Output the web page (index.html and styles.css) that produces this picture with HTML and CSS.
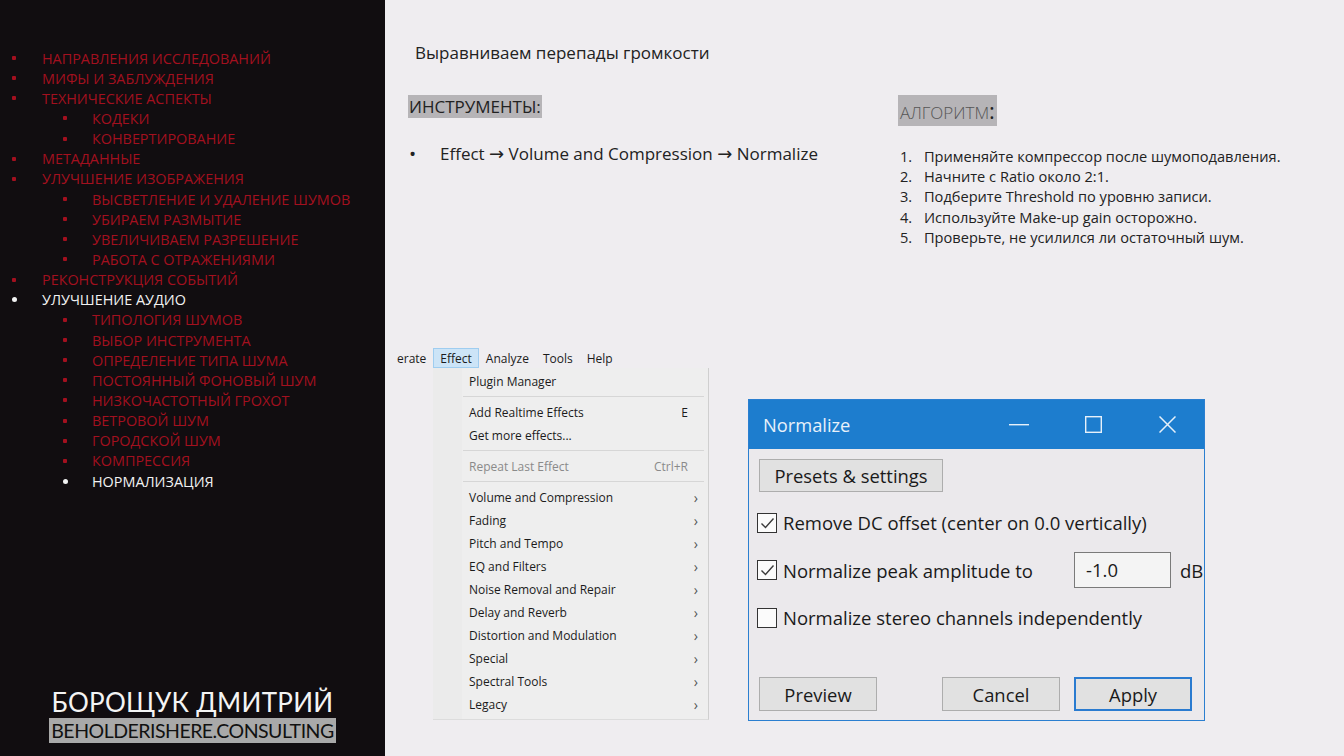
FILE: index.html
```html
<!DOCTYPE html>
<html lang="ru">
<head>
<meta charset="utf-8">
<title>Нормализация</title>
<link rel="stylesheet" href="styles.css">
</head>
<body>
<div class="app">
  <aside class="side">
    <ul class="nav">
      <li class="item l1">НАПРАВЛЕНИЯ ИССЛЕДОВАНИЙ</li>
      <li class="item l1">МИФЫ И ЗАБЛУЖДЕНИЯ</li>
      <li class="item l1">ТЕХНИЧЕСКИЕ АСПЕКТЫ</li>
      <li class="item l2">КОДЕКИ</li>
      <li class="item l2">КОНВЕРТИРОВАНИЕ</li>
      <li class="item l1">МЕТАДАННЫЕ</li>
      <li class="item l1">УЛУЧШЕНИЕ ИЗОБРАЖЕНИЯ</li>
      <li class="item l2">ВЫСВЕТЛЕНИЕ И УДАЛЕНИЕ ШУМОВ</li>
      <li class="item l2">УБИРАЕМ РАЗМЫТИЕ</li>
      <li class="item l2">УВЕЛИЧИВАЕМ РАЗРЕШЕНИЕ</li>
      <li class="item l2">РАБОТА С ОТРАЖЕНИЯМИ</li>
      <li class="item l1">РЕКОНСТРУКЦИЯ СОБЫТИЙ</li>
      <li class="item l1 current">УЛУЧШЕНИЕ АУДИО</li>
      <li class="item l2">ТИПОЛОГИЯ ШУМОВ</li>
      <li class="item l2">ВЫБОР ИНСТРУМЕНТА</li>
      <li class="item l2">ОПРЕДЕЛЕНИЕ ТИПА ШУМА</li>
      <li class="item l2">ПОСТОЯННЫЙ ФОНОВЫЙ ШУМ</li>
      <li class="item l2">НИЗКОЧАСТОТНЫЙ ГРОХОТ</li>
      <li class="item l2">ВЕТРОВОЙ ШУМ</li>
      <li class="item l2">ГОРОДСКОЙ ШУМ</li>
      <li class="item l2">КОМПРЕССИЯ</li>
      <li class="item l2 current">НОРМАЛИЗАЦИЯ</li>
    </ul>
    <div class="author">
      <div class="author-name">БОРОЩУК ДМИТРИЙ</div>
      <div class="author-site">BEHOLDERISHERE.CONSULTING</div>
    </div>
  </aside>

  <main class="slide">
    <h1 class="title">Выравниваем перепады громкости</h1>

    <div class="cols">
      <section class="tools">
        <h2 class="hl">ИНСТРУМЕНТЫ:</h2>
        <ul class="bullets">
          <li class="bullet-item"><span class="dot">•</span><span>Effect <span class="arr">→</span> Volume and Compression <span class="arr">→</span> Normalize</span></li>
        </ul>
      </section>
      <section class="algo">
        <h2 class="hl hl-light">АЛГОРИТМ<span class="colon">:</span></h2>
        <ol class="steps">
          <li class="step"><span class="num">1.</span>Применяйте компрессор после шумоподавления.</li>
          <li class="step"><span class="num">2.</span>Начните с Ratio около 2:1.</li>
          <li class="step"><span class="num">3.</span>Подберите Threshold по уровню записи.</li>
          <li class="step"><span class="num">4.</span>Используйте Make-up gain осторожно.</li>
          <li class="step"><span class="num">5.</span>Проверьте, не усилился ли остаточный шум.</li>
        </ol>
      </section>
    </div>

    <div class="shots">
      <div class="menu-shot">
        <div class="menubar">
          <span class="mb-item first">erate</span>
          <span class="mb-item active">Effect</span>
          <span class="mb-item">Analyze</span>
          <span class="mb-item">Tools</span>
          <span class="mb-item">Help</span>
        </div>
        <div class="dropdown">
          <div class="mi"><span class="mi-label">Plugin Manager</span><span class="mi-key"></span><span class="mi-arrow"></span></div>
          <div class="sep"></div>
          <div class="mi"><span class="mi-label">Add Realtime Effects</span><span class="mi-key">E</span><span class="mi-arrow"></span></div>
          <div class="mi"><span class="mi-label">Get more effects...</span><span class="mi-key"></span><span class="mi-arrow"></span></div>
          <div class="sep"></div>
          <div class="mi disabled"><span class="mi-label">Repeat Last Effect</span><span class="mi-key">Ctrl+R</span><span class="mi-arrow"></span></div>
          <div class="sep"></div>
          <div class="mi"><span class="mi-label">Volume and Compression</span><span class="mi-key"></span><span class="mi-arrow">›</span></div>
          <div class="mi"><span class="mi-label">Fading</span><span class="mi-key"></span><span class="mi-arrow">›</span></div>
          <div class="mi"><span class="mi-label">Pitch and Tempo</span><span class="mi-key"></span><span class="mi-arrow">›</span></div>
          <div class="mi"><span class="mi-label">EQ and Filters</span><span class="mi-key"></span><span class="mi-arrow">›</span></div>
          <div class="mi"><span class="mi-label">Noise Removal and Repair</span><span class="mi-key"></span><span class="mi-arrow">›</span></div>
          <div class="mi"><span class="mi-label">Delay and Reverb</span><span class="mi-key"></span><span class="mi-arrow">›</span></div>
          <div class="mi"><span class="mi-label">Distortion and Modulation</span><span class="mi-key"></span><span class="mi-arrow">›</span></div>
          <div class="mi"><span class="mi-label">Special</span><span class="mi-key"></span><span class="mi-arrow">›</span></div>
          <div class="mi"><span class="mi-label">Spectral Tools</span><span class="mi-key"></span><span class="mi-arrow">›</span></div>
          <div class="mi"><span class="mi-label">Legacy</span><span class="mi-key"></span><span class="mi-arrow">›</span></div>
        </div>
      </div>

      <div class="dialog">
        <div class="titlebar">
          <span class="dlg-title">Normalize</span>
          <span class="ctrl">
            <svg width="20" height="2" viewBox="0 0 20 2"><rect x="0" y="0" width="20" height="1.4" fill="#e6f0fa"/></svg>
          </span>
          <span class="ctrl">
            <svg width="17" height="17" viewBox="0 0 17 17"><rect x="0.7" y="0.7" width="15.6" height="15.6" fill="none" stroke="#e6f0fa" stroke-width="1.4"/></svg>
          </span>
          <span class="ctrl">
            <svg width="17" height="17" viewBox="0 0 17 17"><path d="M0.5 0.5 L16.5 16.5 M16.5 0.5 L0.5 16.5" stroke="#e6f0fa" stroke-width="1.5" fill="none"/></svg>
          </span>
        </div>
        <div class="dlg-body">
          <button class="btn presets">Presets &amp; settings</button>
          <div class="opt">
            <span class="cb checked"><svg width="15" height="12" viewBox="0 0 15 12"><path d="M1.5 6.5 L5.5 10.5 L13.5 1.5" stroke="#3a3a3a" stroke-width="1.4" fill="none"/></svg></span>
            <span class="opt-label">Remove DC offset (center on 0.0 vertically)</span>
          </div>
          <div class="opt">
            <span class="cb checked"><svg width="15" height="12" viewBox="0 0 15 12"><path d="M1.5 6.5 L5.5 10.5 L13.5 1.5" stroke="#3a3a3a" stroke-width="1.4" fill="none"/></svg></span>
            <span class="opt-label fixed">Normalize peak amplitude to</span>
            <span class="field">-1.0</span>
            <span class="unit">dB</span>
          </div>
          <div class="opt">
            <span class="cb"></span>
            <span class="opt-label">Normalize stereo channels independently</span>
          </div>
          <div class="actions">
            <button class="btn act">Preview</button>
            <button class="btn act cancel">Cancel</button>
            <button class="btn act apply">Apply</button>
          </div>
        </div>
      </div>
    </div>
  </main>
</div>
</body>
</html>
```

FILE: styles.css
```css
* { box-sizing: border-box; }
html, body { margin: 0; padding: 0; }
body {
  width: 1344px;
  height: 756px;
  overflow: hidden;
  font-family: "Open Sans", "Noto Sans", sans-serif;
  background: #efedf0;
}
.app {
  display: flex;
  width: 1344px;
  height: 756px;
}

/* ---------- sidebar ---------- */
.side {
  width: 385px;
  flex: none;
  background: #110d10;
  display: flex;
  flex-direction: column;
  justify-content: space-between;
  overflow: hidden;
}
.nav {
  list-style: none;
  margin: 0;
  padding: 48px 0 0 0;
}
.item {
  display: flex;
  align-items: center;
  height: 20.15px;
  font-size: 14.4px;
  color: #a3101f;
  white-space: nowrap;
}
.item::before {
  content: "";
  flex: none;
  width: 4px;
  height: 4px;
  border-radius: 1px;
  background: #a3101f;
}
.l1::before { margin: 0 26px 0 12px; }
.l2::before { margin: 0 25px 0 63px; }
.item.current { color: #f2f2f2; }
.item.current::before { background: #f2f2f2; border-radius: 50%; width: 5px; height: 5px; }
.l1.current::before { margin: 0 25px 0 12px; }
.l2.current::before { margin: 0 24px 0 63px; }

.author {
  display: flex;
  flex-direction: column;
  align-items: center;
  padding: 0 0 13px 0;
}
.author-name {
  font-family: "Lato", "Open Sans", sans-serif;
  font-size: 26px;
  line-height: 30px;
  color: #f4f4f4;
  letter-spacing: 0.3px;
  margin-bottom: 1px;
}
.author-site {
  font-family: "Lato", "Open Sans", sans-serif;
  background: #a9a9a9;
  color: #111;
  font-size: 19.5px;
  letter-spacing: -0.5px;
  line-height: 25px;
  padding: 0 2px;
}

/* ---------- slide ---------- */
.slide {
  flex: 1;
  display: flex;
  flex-direction: column;
  color: #222;
}
.title {
  margin: 42px 0 0 30px;
  font-size: 17px;
  line-height: 22px;
  font-weight: 400;
}
.cols {
  display: flex;
  height: 253px;
  margin-top: 31px;
  padding-left: 23px;
}
.tools { width: 490px; }
.hl {
  display: inline-block;
  margin: 0;
  background: #b6b4b7;
  font-size: 17px;
  line-height: 23px;
  font-weight: 400;
  padding: 0 1px;
  color: #222;
}
.hl-light {
  color: #555;
  line-height: 31px;
  height: 31px;
  font-weight: 300;
  padding: 0 2px;
}
.colon { color: #222; font-size: 22px; font-weight: 400; }
.bullets {
  list-style: none;
  margin: 25px 0 0 0;
  padding: 0;
}
.bullet-item {
  display: flex;
  font-size: 17px;
  line-height: 22px;
}
.dot { width: 32px; padding-left: 1px; font-size: 19px; line-height: 22px; }
.arr { font-family: "DejaVu Sans", sans-serif; font-size: 18px; line-height: 22px; }

.steps {
  list-style: none;
  margin: 20px 0 0 2px;
  padding: 0;
}
.step {
  display: flex;
  font-size: 14.6px;
  line-height: 20.2px;
}
.num { width: 24px; }

/* ---------- screenshots ---------- */
.shots {
  display: flex;
  align-items: flex-start;
}
.menu-shot {
  margin-left: 12px;
  width: 312px;
  font-size: 12px;
  color: #1b1b1b;
}
.menubar {
  display: flex;
  height: 20px;
  align-items: stretch;
}
.mb-item {
  padding: 0 6px;
  line-height: 19px;
  border: 1px solid transparent;
}
.mb-item.first { padding-left: 0; border-left: 0; padding-right: 6px; }
.mb-item.active {
  background: #cce4f7;
  border-color: #9fcdf0;
}
.dropdown {
  margin-left: 36px;
  width: 276px;
  background: #eeeeee;
  border-right: 1px solid #cfcfcf;
  border-bottom: 1px solid #dcdcdc;
  padding: 2px 0 3px 0;
  background-image: linear-gradient(to right, #ebebeb 0, #ebebeb 29px, #eeeeee 29px);
}
.mi {
  display: flex;
  align-items: center;
  height: 23px;
  padding: 0 10px 0 36px;
}
.mi-label { flex: 1; }
.mi-arrow {
  width: 10px;
  text-align: right;
  color: #555;
  font-size: 14px;
}
.mi.disabled { color: #8a8a8a; }
.sep {
  height: 8px;
  margin: 0 4px 0 30px;
  background: linear-gradient(#d6d6d6, #d6d6d6) no-repeat 0 3px / 100% 1px;
}

.dialog {
  margin: 51px 0 0 39px;
  width: 457px;
  height: 322px;
  border: 1px solid #2b7fd0;
  background: #ebe9ec;
  display: flex;
  flex-direction: column;
  color: #1a1a1a;
}
.titlebar {
  height: 49px;
  flex: none;
  background: #1d7dce;
  display: flex;
  align-items: center;
}
.dlg-title {
  flex: 1;
  padding-left: 14px;
  color: #e8f1fa;
  font-size: 18.3px;
}
.ctrl {
  width: 74px;
  height: 49px;
  display: flex;
  align-items: center;
  justify-content: center;
}
.dlg-body {
  flex: 1;
  display: flex;
  flex-direction: column;
  align-items: flex-start;
  padding: 10px 10px 9px 10px;
}
.btn {
  font-family: "Open Sans", "Noto Sans", sans-serif;
  font-size: 18.4px;
  color: #1a1a1a;
  background: #e1e1e1;
  border: 1px solid #adadad;
  padding: 0;
  margin: 0;
}
.presets {
  width: 184px;
  height: 33px;
}
.opt {
  display: flex;
  align-items: center;
  height: 47.5px;
  margin-left: -2px;
  font-size: 18.5px;
  white-space: nowrap;
}
.dlg-body .opt:first-of-type { margin-top: 7px; }
.cb {
  width: 20px;
  height: 20px;
  flex: none;
  border: 1px solid #333;
  background: #fbfbfb;
  margin-right: 6px;
  display: flex;
  align-items: center;
  justify-content: center;
}
.opt-label.fixed { width: 291px; }
.field {
  width: 97px;
  height: 36px;
  flex: none;
  border: 1px solid #7a7a7a;
  background: #f4f4f4;
  padding-left: 11px;
  line-height: 33px;
}
.unit { margin-left: 9px; }
.actions {
  margin-top: auto;
  display: flex;
  width: 100%;
}
.act {
  width: 118px;
  height: 34px;
}
.cancel { margin-left: 65px; }
.apply {
  margin-left: 14px;
  border: 2px solid #2a7bd0;
}
```
